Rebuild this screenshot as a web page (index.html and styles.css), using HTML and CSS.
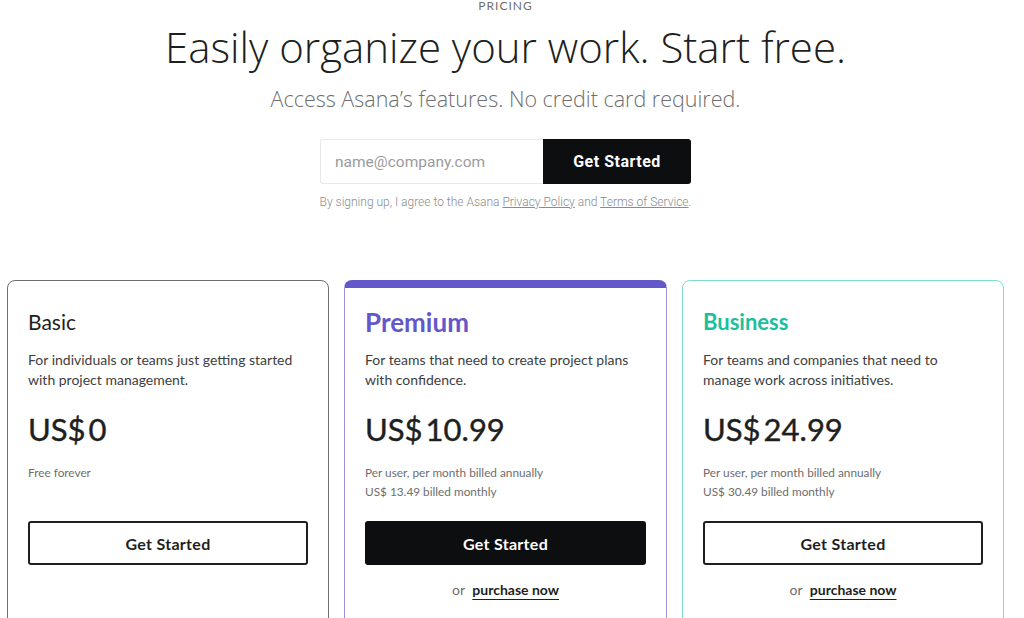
FILE: index.html
```html
<!DOCTYPE html>
<html>
<head>
<meta charset="utf-8">
<link rel="stylesheet" href="styles.css">
</head>
<body>
<div class="page">
  <header class="hero">
    <div class="eyebrow">PRICING</div>
    <h1 class="title">Easily organize your work. Start free.</h1>
    <p class="subtitle">Access Asana’s features. No credit card required.</p>
    <form class="signup">
      <input class="email" type="text" placeholder="name@company.com">
      <button class="signup-btn" type="button">Get Started</button>
    </form>
    <p class="legal">By signing up, I agree to the Asana <a href="#">Privacy Policy</a> and <a href="#">Terms of Service</a>.</p>
  </header>
  <section class="plans">
    <div class="card basic">
      <h2 class="plan-name">Basic</h2>
      <p class="plan-desc">For individuals or teams just getting started with project management.</p>
      <div class="price">US$<span class="amt">0</span></div>
      <p class="note">Free forever</p>
      <a class="btn outline" href="#">Get Started</a>
    </div>
    <div class="card premium">
      <h2 class="plan-name">Premium</h2>
      <p class="plan-desc">For teams that need to create project plans with confidence.</p>
      <div class="price">US$<span class="amt">10.99</span></div>
      <p class="note">Per user, per month billed annually<br>US$ 13.49 billed monthly</p>
      <a class="btn solid" href="#">Get Started</a>
      <p class="alt">or <a href="#">purchase now</a></p>
    </div>
    <div class="card business">
      <h2 class="plan-name">Business</h2>
      <p class="plan-desc">For teams and companies that need to manage work across initiatives.</p>
      <div class="price">US$<span class="amt">24.99</span></div>
      <p class="note">Per user, per month billed annually<br>US$ 30.49 billed monthly</p>
      <a class="btn outline" href="#">Get Started</a>
      <p class="alt">or <a href="#">purchase now</a></p>
    </div>
  </section>
</div>
</body>
</html>
```
FILE: styles.css
```css
* { box-sizing: border-box; }
html, body { margin: 0; padding: 0; background: #fff; }
body {
  font-family: "Lato", "Liberation Sans", sans-serif;
  color: #1e1f21;
  overflow: hidden;
  height: 618px;
}
.page {
  width: 1011px;
  padding: 0 7px;
}
.hero {
  display: flex;
  flex-direction: column;
  align-items: center;
}
.eyebrow {
  font-size: 12px;
  letter-spacing: 1px;
  color: #6d6e6f;
  line-height: 12px;
}
.title {
  font-family: "Open Sans", "Lato", sans-serif;
  font-weight: 300;
  font-size: 42px;
  line-height: 50px;
  margin: 10px 0 0;
  color: #1e1f21;
}
.subtitle {
  font-family: "Open Sans", "Lato", sans-serif;
  font-weight: 300;
  font-size: 21.5px;
  line-height: 26px;
  color: #6d6e6f;
  margin: 14px 0 0;
}
.signup {
  display: flex;
  margin: 27px 0 0;
}
.email {
  width: 223px;
  height: 45px;
  border: 1px solid #e8e8e8;
  border-right: none;
  border-radius: 3px 0 0 3px;
  padding: 0 14px;
  font-family: "Roboto", "Liberation Sans", sans-serif;
  font-size: 15.5px;
  color: #1e1f21;
  outline: none;
}
.email::placeholder { color: #9a9b9d; }
.signup-btn {
  width: 148px;
  height: 45px;
  background: #0d0e10;
  color: #fff;
  border: none;
  border-radius: 0 3px 3px 0;
  font-family: "Roboto", "Liberation Sans", sans-serif;
  font-weight: 700;
  font-size: 16px;
  letter-spacing: 0.5px;
}
.legal {
  font-family: "Roboto", "Liberation Sans", sans-serif;
  font-weight: 300;
  font-size: 12px;
  color: #8a8b8d;
  margin: 11px 0 0;
  line-height: 14px;
}
.legal a { color: #8a8b8d; text-decoration: underline; }
.plans {
  display: grid;
  grid-template-columns: 322px 323px 322px;
  gap: 15px;
  margin-top: 71px;
}
.card {
  border: 1px solid #6d6e6f;
  border-radius: 8px;
  padding: 27px 20px 0;
  height: 360px;
}
.premium {
  border-color: #9a8fe3;
  border-top: 8px solid #6457c9;
  padding-top: 20px;
}
.business { border-color: #7fdcc9; }
.plan-name {
  font-size: 21px;
  font-weight: 400;
  line-height: 28px;
  margin: 0;
  color: #1e1f21;
}
.premium .plan-name { color: #6457c9; font-size: 26px; font-weight: 700; }
.business .plan-name { color: #1cbf9d; font-size: 22px; font-weight: 700; }
.plan-desc {
  font-size: 14px;
  line-height: 20px;
  color: #3d3e40;
  margin: 14px 0 0;
  padding-right: 6px;
}
.price {
  font-size: 31px;
  font-weight: 400;
  line-height: 36px;
  margin-top: 21px;
  color: #1e1f21;
  -webkit-text-stroke: 0.4px #1e1f21;
}
.amt { margin-left: 3px; }
.note {
  font-size: 11.8px;
  line-height: 19px;
  color: #6d6e6f;
  margin: 16px 0 0;
  min-height: 38px;
}
.btn {
  display: flex;
  align-items: center;
  justify-content: center;
  height: 44px;
  margin-top: 20px;
  border-radius: 3px;
  font-size: 16px;
  font-weight: 700;
  letter-spacing: 0.3px;
  text-decoration: none;
}
.btn.outline { border: 2px solid #1e1f21; color: #1e1f21; }
.btn.solid { background: #0d0e10; color: #fff; }
.alt {
  text-align: center;
  font-size: 14px;
  line-height: 18px;
  color: #6d6e6f;
  margin: 16px 0 0;
}
.alt a {
  color: #1e1f21;
  font-weight: 700;
  margin-left: 4px;
  text-decoration: underline;
  text-underline-offset: 4px;
}
```
